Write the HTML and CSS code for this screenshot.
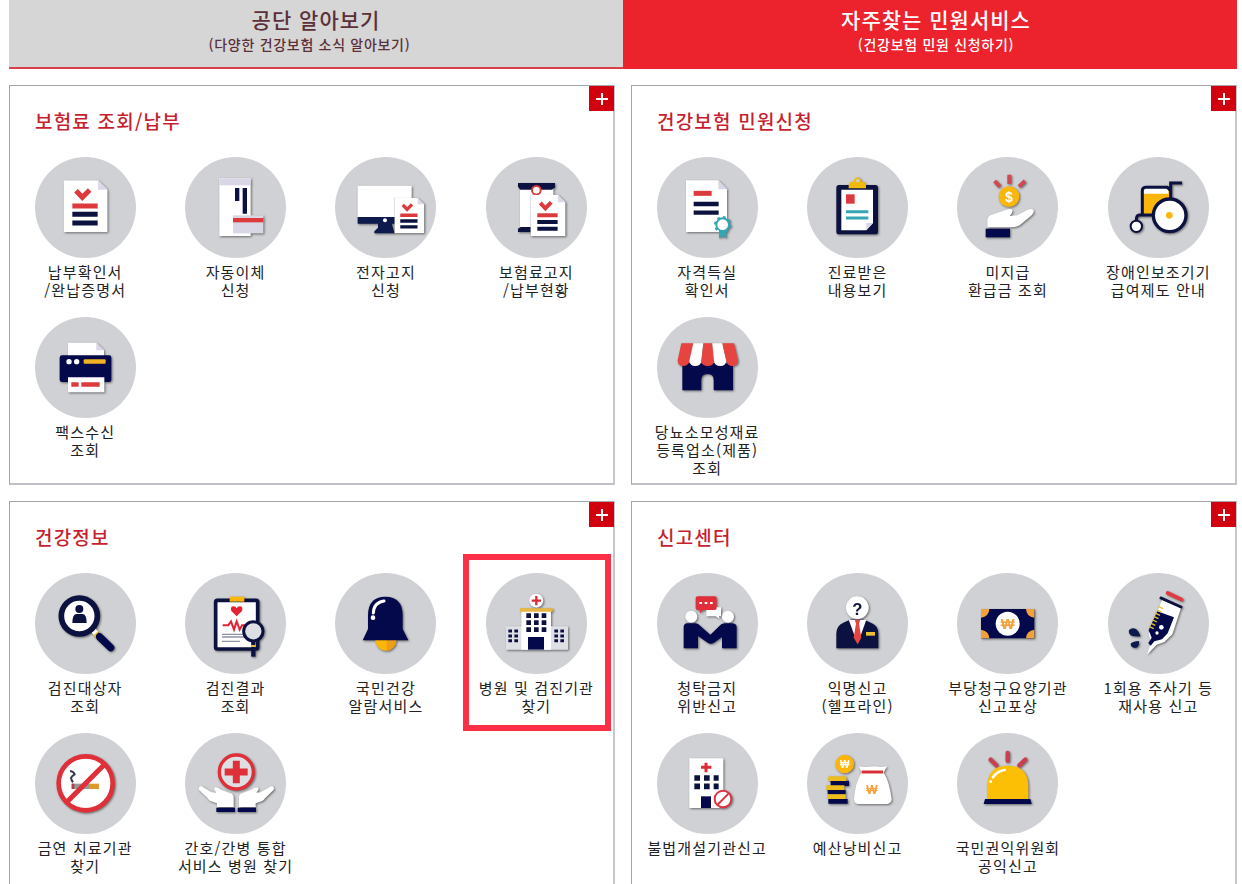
FILE: index.html
```
<!DOCTYPE html>
<html lang="ko">
<head>
    <meta charset="UTF-8">
    <meta name="viewport" content="width=device-width, initial-scale=1.0">
    <title>국민건강보험공단</title>
    <link rel="stylesheet" href="styles.css">
</head>
<body>
    <svg class="defs">
        <symbol id="doc" viewBox="0 0 132 156">
            <path d="M0 0H103L132 28V156H0z" fill="#fff"/>
            <path d="M103 0V28H132z" fill="#dcd8ea"/>
            <path d="M37 31l19 20 22-22" fill="none" stroke="#dc3a3d" stroke-width="15"/>
            <path d="M26 77H102" stroke="#dc3a3d" stroke-width="15"/>
            <path d="M26 102H102M26 128H102" stroke="#0c1240" stroke-width="15"/>
        </symbol>
    </svg>

    <nav class="tabs">
        <a class="tab about" href="#"><strong>공단 알아보기</strong><span>(다양한 건강보험 소식 알아보기)</span></a>
        <a class="tab active" href="#"><strong>자주찾는 민원서비스</strong><span>(건강보험 민원 신청하기)</span></a>
    </nav>

    <main class="panels">
        <section class="panel">
            <a class="more" href="#"></a>
            <h2>보험료 조회/납부</h2>
            <div class="items">
                <a class="item">
                    <span class="circle"><svg viewBox="45 21 303 303">
                        <use href="#doc" x="131" y="91" width="132" height="156"/>
                    </svg></span>
                    납부확인서<br>/완납증명서
                </a>
                <a class="item">
                    <span class="circle"><svg viewBox="495 21 303 303">
                        <path d="M598 85H692V258H598z" fill="#fff"/>
                        <path d="M598 85H692V106H598z" fill="#d9d6e6"/>
                        <path d="M645 114h13v39h-13zM668 114h13v77h-13z" fill="#0c1240"/>
                        <path d="M639 196H730V250H639z" fill="#d9d6e6"/>
                        <path d="M639 204H730V217H639z" fill="#dc3a3d"/>
                    </svg></span>
                    자동이체<br>신청
                </a>
                <a class="item">
                    <span class="circle"><svg viewBox="48 21 303 303">
                        <path d="M116 107H278V202H116z" fill="#fff"/>
                        <path d="M116 201H278V221H218L227 250H166V244L177 233V221H116z" fill="#0c1a4c"/>
                        <circle cx="198" cy="211" r="6" fill="#fff"/>
                        <use class="front" href="#doc" x="226" y="143" width="90" height="107"/>
                    </svg></span>
                    전자고지<br>신청
                </a>
                <a class="item">
                    <span class="circle"><svg viewBox="499 21 303 303">
                        <path d="M601 110H701V240H601z" fill="#fff"/>
                        <path d="M595 99H706V112L697 119H602L595 110zM595 236L603 231H640V246H595z" fill="#0c1240"/>
                        <circle cx="650" cy="121" r="13" fill="#fff" stroke="#dc3a3d" stroke-width="6"/>
                        <use class="front" href="#doc" x="632" y="134" width="106" height="125"/>
                    </svg></span>
                    보험료고지<br>/납부현황
                </a>
                <a class="item">
                    <span class="circle"><svg viewBox="45 21 303 303">
                        <path d="M144 98H229L252 121V145H144z" fill="#fff"/>
                        <path d="M229 98V121H252z" fill="#d9d6e6"/>
                        <path d="M126 136H267Q274 136 274 143V209Q274 216 267 216H126Q119 216 119 209V143Q119 136 126 136z" fill="#03094a"/>
                        <circle cx="147" cy="155" r="8" fill="#fff"/>
                        <circle cx="170" cy="155" r="8" fill="#fff"/>
                        <rect x="191" y="148" width="66" height="13" rx="3" fill="#f0b323"/>
                        <path d="M144 202H253V247H144z" fill="#fff"/>
                        <path d="M154 217H176V230H154zM184 217H239V230H184z" fill="#dc3a3d"/>
                    </svg></span>
                    팩스수신<br>조회
                </a>
            </div>
        </section>

        <section class="panel">
            <a class="more" href="#"></a>
            <h2>건강보험 민원신청</h2>
            <div class="items">
                <a class="item">
                    <span class="circle"><svg viewBox="50 21 303 303">
                        <path d="M137 91H234L260 118V246H137z" fill="#fff"/>
                        <path d="M234 91V118H260z" fill="#d9d6e6"/>
                        <path d="M160 130H214" stroke="#dc3a3d" stroke-width="15"/>
                        <path d="M160 162H235M160 188H235" stroke="#0c1240" stroke-width="13"/>
                        <path d="M236 235V265L247 259L258 265V235z" fill="#35a6b4"/>
                        <circle cx="247" cy="224" r="22" fill="none" stroke="#35a6b4" stroke-width="8" stroke-dasharray="8 9.3"/>
                        <circle cx="247" cy="224" r="19" fill="#fff" stroke="#35a6b4" stroke-width="6"/>
                    </svg></span>
                    자격득실<br>확인서
                </a>
                <a class="item">
                    <span class="circle"><svg viewBox="501 21 303 303">
                        <rect x="589" y="105" width="125" height="148" rx="8" fill="#0c1240"/>
                        <path d="M604 119H699V219L679 241H604z" fill="#fff"/>
                        <path d="M699 219L679 241V219z" fill="#d9d6e6"/>
                        <path d="M626 115V103L633 95H641Q644 82 652 82Q661 82 665 95H672L678 103V115z" fill="#f2b90f"/>
                        <circle cx="653" cy="92" r="5" fill="#d0d1d4"/>
                        <path d="M618 133H644V161H618z" fill="#dc3a3d"/>
                        <path d="M618 185H685M618 204H685" stroke="#35a6b4" stroke-width="9"/>
                    </svg></span>
                    진료받은<br>내용보기
                </a>
                <a class="item">
                    <span class="circle"><svg viewBox="52 21 303 303">
                        <path d="M165 93L181 110M209 74V102M256 93L238 110" stroke="#d04850" stroke-width="12"/>
                        <circle cx="208" cy="140" r="31" fill="#fbb60c"/>
                        <text class="coin" x="208" y="155" font-size="42">$</text>
                        <path d="M143 232V210Q143 201 152 196L200 179Q212 174 219 180Q219 190 210 198L233 196L263 180Q276 173 282 181Q284 187 276 196L240 226Q233 230 225 231L211 232z" fill="#fff"/>
                        <path d="M138 236H211V262H138z" fill="#03094a"/>
                    </svg></span>
                    미지급<br>환급금 조회
                </a>
                <a class="item">
                    <span class="circle"><svg viewBox="503 21 303 303">
                        <path d="M604 113H688V194H604z" fill="#fbb60c"/>
                        <path d="M610 113H684V131H605V118z" fill="#fff"/>
                        <path d="M606 192V122Q606 113 616 112H681L691 122V150M691 122V99H725M640 195H597Q588 196 588 210" fill="none" stroke="#0c1240" stroke-width="9"/>
                        <circle cx="688" cy="196" r="49" fill="#fff" stroke="#0c1240" stroke-width="10"/>
                        <circle cx="687" cy="196" r="10" fill="#fbb60c"/>
                        <circle cx="588" cy="229" r="17" fill="#fff" stroke="#0c1240" stroke-width="6"/>
                    </svg></span>
                    장애인보조기기<br>급여제도 안내
                </a>
                <a class="item">
                    <span class="circle"><svg viewBox="50 21 303 303">
                        <path d="M126 160H278V241H220V211Q220 192 202 192Q183 192 183 211V241H126z" fill="#03094a"/>
                        <path d="M123 100H159L147 153Q144 168 128 168Q112 168 112 151z" fill="#e8443f"/>
                        <path d="M159 100H189L183 153Q181 168 165 168Q149 168 147 153z" fill="#fff"/>
                        <path d="M189 100H216L221 153Q220 168 202 168Q184 168 183 153z" fill="#e8443f"/>
                        <path d="M216 100H246L258 153Q256 168 240 168Q223 168 221 153z" fill="#fff"/>
                        <path d="M246 100H281L293 151Q293 168 277 168Q261 168 258 153z" fill="#e8443f"/>
                    </svg></span>
                    당뇨소모성재료<br>등록업소(제품)<br>조회
                </a>
            </div>
        </section>

        <section class="panel">
            <a class="more" href="#"></a>
            <h2>건강정보</h2>
            <div class="items">
                <a class="item">
                    <span class="circle"><svg viewBox="45 24 303 303">
                        <path d="M218 194L229 206" stroke="#fff" stroke-width="16"/>
                        <path d="M228 204L238 216" stroke="#e9c12c" stroke-width="20"/>
                        <path d="M239 216L272 248" stroke="#03094a" stroke-width="22" stroke-linecap="round"/>
                        <path d="M229 212L238 203" stroke="#03094a" stroke-width="4"/>
                        <circle cx="178" cy="153" r="54" fill="#fff" stroke="#0c1240" stroke-width="17"/>
                        <circle cx="178" cy="132" r="12" fill="#0c1240"/>
                        <path d="M157 174Q157 147 170 147H187Q200 147 200 174z" fill="#0c1240"/>
                    </svg></span>
                    검진대상자<br>조회
                </a>
                <a class="item">
                    <span class="circle"><svg viewBox="495 24 303 303">
                        <rect x="587" y="106" width="126" height="146" rx="5" fill="#fff" stroke="#0c1240" stroke-width="11"/>
                        <path d="M629 95H673V110H629z" fill="#fbb60c"/>
                        <path d="M650 154L634 138Q630 126 639 124Q647 123 650 130Q653 123 661 124Q670 126 666 138z" fill="#e02434"/>
                        <path d="M608 181H625L633 169L642 194L650 169L659 194L666 181H676" fill="none" stroke="#e02434" stroke-width="6"/>
                        <path d="M606 208H680M606 216H680M606 229H660" stroke="#8f90aa" stroke-width="4"/>
                        <path d="M700 228V275" stroke="#0c1240" stroke-width="13"/>
                        <path d="M693 243H707" stroke="#e9c12c" stroke-width="6"/>
                        <circle cx="700" cy="199" r="29" fill="#dedfe5" stroke="#0c1240" stroke-width="9"/>
                    </svg></span>
                    검진결과<br>조회
                </a>
                <a class="item">
                    <span class="circle"><svg viewBox="48 248 303 303">
                        <path d="M168 446H232Q231 479 200 481Q170 479 168 446z" fill="#fbb60c"/>
                        <path d="M203 448H232Q231 477 203 481z" fill="#ee9d14"/>
                        <path d="M131 450L147 416V375Q147 319 199 319Q251 319 251 375V416L268 450z" fill="#03094a"/>
                        <path d="M163 368Q164 337 195 332" fill="none" stroke="#fff" stroke-width="9" stroke-linecap="round"/>
                        <circle cx="162" cy="382" r="7" fill="#fff"/>
                    </svg></span>
                    국민건강<br>알람서비스
                </a>
                <a class="item highlight">
                    <span class="circle"><svg viewBox="499 248 303 303">
                        <circle cx="650" cy="331" r="21" fill="#fff"/>
                        <path d="M650 317V345M636 331H664" stroke="#dc2c35" stroke-width="7"/>
                        <path d="M559 408H745V478H559z" fill="#dfe0e5"/>
                        <path d="M605 362H694V478H605z" fill="#fff"/>
                        <path d="M601 354H699V364H601z" fill="#e8b63c"/>
                        <path d="M620 376H680M620 397H680M620 418H680" stroke="#0c1240" stroke-width="14" stroke-dasharray="14 9"/>
                        <path d="M566 422H595M566 437H595M566 451H595M704 422H733M704 437H733M704 451H733" stroke="#0c1240" stroke-width="9" stroke-dasharray="11 7"/>
                        <path d="M625 440H673V478H625z" fill="#03094a"/>
                    </svg></span>
                    병원 및 검진기관<br>찾기
                </a>
                <a class="item">
                    <span class="circle"><svg viewBox="45 503 303 303">
                        <circle cx="197" cy="654" r="81" fill="#fff"/>
                        <path d="M155 655H207V671H155z" fill="#999"/>
                        <path d="M155 655H163V671H155z" fill="#b83e42"/>
                        <path d="M207 655H237V671H207z" fill="#dd9a2b"/>
                        <path d="M150 617Q161 618 164 627Q155 632 153 638Q154 644 159 651" fill="none" stroke="#333b4d" stroke-width="6"/>
                        <path d="M143 708L251 600" stroke="#df3039" stroke-width="15"/>
                        <circle cx="197" cy="654" r="81" fill="none" stroke="#df3039" stroke-width="14"/>
                    </svg></span>
                    금연 치료기관<br>찾기
                </a>
                <a class="item">
                    <span class="circle"><svg viewBox="495 503 303 303">
                        <circle cx="649" cy="620" r="51" fill="#dedfe2" stroke="#df3039" stroke-width="10"/>
                        <path d="M649 586V654M614 620H683" stroke="#df3039" stroke-width="21"/>
                        <path id="hand" d="M591 725V714L571 707Q566 704 563 699L538 675Q533 667 541 663Q546 662 552 667L576 681L589 682Q580 674 583 667Q592 662 604 673L636 685Q641 688 641 696V725z" fill="#fff"/>
                        <path d="M589 727H645V740H589zM653 727H708V740H653z" fill="#03094a"/>
                        <use href="#hand" transform="translate(1298 0) scale(-1 1)"/>
                    </svg></span>
                    간호/간병 통합<br>서비스 병원 찾기
                </a>
            </div>
        </section>

        <section class="panel">
            <a class="more" href="#"></a>
            <h2>신고센터</h2>
            <div class="items">
                <a class="item">
                    <span class="circle"><svg viewBox="50 24 303 303">
                        <path d="M198 127H242V154H236L238 162L226 154H198z" fill="#fff"/>
                        <path d="M172 94H223Q229 94 229 100V129Q229 135 223 135H188L179 145L178 135H172Q166 135 166 129V100Q166 94 172 94z" fill="#e02f3b"/>
                        <path d="M177 114H219" stroke="#fff" stroke-width="6" stroke-dasharray="8 8"/>
                        <circle cx="153" cy="155" r="18" fill="#fff"/>
                        <circle cx="263" cy="155" r="18" fill="#fff"/>
                        <path d="M130 250V187Q130 176 140 175H166Q174 176 180 183L210 209L237 183Q243 176 252 175H277Q289 176 289 188V250H245V216L221 233Q211 239 202 233L173 213V250z" fill="#03094a"/>
                    </svg></span>
                    청탁금지<br>위반신고
                </a>
                <a class="item">
                    <span class="circle"><svg viewBox="501 24 303 303">
                        <path d="M589 250V206Q589 182 610 173L633 163H669L694 174Q715 182 715 206V250z" fill="#0c1240"/>
                        <path d="M626 164H679L653 237z" fill="#fff"/>
                        <path d="M644 164H661L657 176L664 218L653 238L641 218L648 176z" fill="#e34640"/>
                        <circle cx="652" cy="128" r="34" fill="#fff"/>
                        <text class="question" x="652" y="149" font-size="50">?</text>
                        <path d="M678 201H705V212H678z" fill="#e9c12c"/>
                    </svg></span>
                    익명신고<br>(헬프라인)
                </a>
                <a class="item">
                    <span class="circle"><svg viewBox="52 24 303 303">
                        <path d="M124 132H284V220H124z" fill="#03094a"/>
                        <path d="M124 132H149Q148 155 124 158zM284 132H259Q260 155 284 158zM124 220H149Q148 197 124 194zM284 220H259Q260 197 284 194z" fill="#f2a13c"/>
                        <circle cx="204" cy="176" r="36" fill="#fff"/>
                        <text class="won" x="204" y="192" font-size="44">₩</text>
                    </svg></span>
                    부당청구요양기관<br>신고포상
                </a>
                <a class="item">
                    <span class="circle"><svg viewBox="503 24 303 303">
                        <path d="M682 84L724 104" stroke="#e23943" stroke-width="11" stroke-linecap="round"/>
                        <path d="M665 105L722 129L696 208L672 231L649 239L620 269L631 234L625 205z" fill="#fff"/>
                        <path d="M651 139L701 157L682 205L665 223L642 229L631 242L624 234L634 218L625 196z" fill="#03094a"/>
                        <path d="M662 99L722 126" stroke="#0c1240" stroke-width="9" stroke-linecap="round"/>
                        <path d="M662 126L631 192" stroke="#e9c12c" stroke-width="16" stroke-dasharray="4 7"/>
                        <circle cx="663" cy="187" r="7" fill="#fff"/>
                        <circle cx="650" cy="204" r="5" fill="#fff"/>
                        <path d="M566 195Q576 185 588 193Q597 201 601 214Q588 215 576 213Q563 207 566 195zM571 236Q579 228 596 228Q598 249 584 249Q571 247 571 236z" fill="#0c1a4c"/>
                    </svg></span>
                    1회용 주사기 등<br>재사용 신고
                </a>
                <a class="item">
                    <span class="circle"><svg viewBox="50 503 303 303">
                        <path d="M147 579H249V728H147z" fill="#fff"/>
                        <path d="M197 592V621M182 606H213" stroke="#dc2c35" stroke-width="9"/>
                        <path d="M162 638H235M162 663H235" stroke="#0c1240" stroke-width="17" stroke-dasharray="17 12"/>
                        <path d="M182 693H212V728H182z" fill="#03094a"/>
                        <circle cx="248" cy="701" r="25" fill="#fff" stroke="#df3543" stroke-width="6"/>
                        <path d="M231 719L265 684" stroke="#df3543" stroke-width="6"/>
                    </svg></span>
                    불법개설기관신고
                </a>
                <a class="item">
                    <span class="circle"><svg viewBox="501 503 303 303">
                        <circle cx="614" cy="596" r="28" fill="#fbb60c"/>
                        <text class="coin" x="614" y="607" font-size="30">₩</text>
                        <path d="M572 646H627V662H572zM563 674H617V687H563zM565 701H623V715H565z" fill="#03094a"/>
                        <path d="M565 633H619V647H565zM559 660H613V674H559zM563 687H617V701H563z" fill="#eebc1c"/>
                        <path d="M657 603Q672 607 687 604L709 603Q725 607 741 602L731 622Q748 647 755 702Q754 715 741 716H655Q643 715 642 703Q645 652 665 622z" fill="#fff"/>
                        <path d="M665 620H729" stroke="#d8303b" stroke-width="9"/>
                        <text class="won" x="696" y="687" font-size="36">₩</text>
                    </svg></span>
                    예산낭비신고
                </a>
                <a class="item">
                    <span class="circle"><svg viewBox="52 503 303 303">
                        <path d="M153 583L170 600M204 563V586M257 583L239 600" stroke="#cb3d4f" stroke-width="13" stroke-linecap="round"/>
                        <path d="M143 701V661Q145 601 204 601Q264 601 266 661V701z" fill="#fdbf06"/>
                        <path d="M160 636Q172 617 195 614" fill="none" stroke="#fff" stroke-width="8" stroke-linecap="round"/>
                        <circle cx="153" cy="649" r="4" fill="#fff"/>
                        <path d="M136 701H272L276 716H132z" fill="#03094a"/>
                    </svg></span>
                    국민권익위원회<br>공익신고
                </a>
            </div>
        </section>
    </main>
</body>
</html>
```
FILE: styles.css
```
body {
    margin: 0;
    width: 1242px;
    height: 884px;
    overflow: hidden;
    background-color: #fff;
    color: #222;
    font-family: "Noto Sans CJK KR", sans-serif;
}
a {
    color: inherit;
    text-decoration: none;
}
.defs {
    display: none;
}
.tabs {
    display: flex;
    box-sizing: border-box;
    height: 69px;
    margin: 0 5px 0 9px;
    border-bottom: 2px solid #d9404a;
}
.tab {
    display: flex;
    flex-direction: column;
    align-items: center;
    box-sizing: border-box;
    width: 614px;
    background-color: #d6d6d6;
    color: #5c3038;
    white-space: nowrap;
}
.tab strong {
    margin-top: 5px;
    font-size: 21px;
    font-weight: 500;
    line-height: 28px;
    letter-spacing: 1px;
}
.tab span {
    font-size: 14px;
    font-weight: 500;
    line-height: 20px;
    letter-spacing: 0.7px;
    margin-top: 1px;
}
.tab.about span {
    margin-right: 13px;
}
.tab.active {
    background-color: #ec222d;
    color: #fff;
    margin-bottom: -2px;
    padding-left: 12px;
}
.panels {
    display: grid;
    grid-template-columns: 606px 606px;
    grid-auto-rows: 400px;
    gap: 16px;
    margin: 16px 0 0 9px;
}
.panel {
    position: relative;
    box-sizing: border-box;
    border: 1px solid #a4a4aa;
    border-right: 2px solid #c6c6ce;
    border-bottom: 2px solid #c0c0c8;
}
.more {
    position: absolute;
    top: 0;
    right: -1px;
    width: 25px;
    height: 25px;
    background:
        linear-gradient(#fff, #fff) center / 12px 2px no-repeat,
        linear-gradient(#fff, #fff) center / 2px 12px no-repeat,
        #d2000f;
}
.panel h2 {
    margin: 21px 0 22px 25px;
    color: #c71f30;
    font-size: 19px;
    font-weight: 500;
    line-height: 28px;
    letter-spacing: 1.2px;
}
.items {
    display: grid;
    grid-template-columns: repeat(4, 150.4px);
    grid-auto-rows: 160px;
}
.item {
    position: relative;
    font-size: 15px;
    line-height: 18px;
    letter-spacing: 1.15px;
    text-align: center;
    white-space: nowrap;
}
.circle {
    display: block;
    width: 101px;
    height: 101px;
    margin: 0 auto 5px;
    border-radius: 50%;
    background-color: #d0d1d4;
}
.circle svg {
    display: block;
    width: 101px;
    height: 101px;
    filter: drop-shadow(1px 1px 0.8px rgba(0, 0, 0, 0.5));
}
.circle text {
    font-family: "Liberation Sans", sans-serif;
    font-weight: bold;
    text-anchor: middle;
    letter-spacing: 0;
}
.front {
    filter: drop-shadow(0 0 2px rgba(0, 0, 0, 0.5));
}
.coin {
    fill: #fff;
}
.won {
    fill: #f2a13c;
}
.question {
    fill: #0c1240;
}
.highlight::after {
    content: "";
    position: absolute;
    top: -19px;
    left: 2px;
    width: 136px;
    height: 165px;
    border: 6px solid #fb3047;
}
```
